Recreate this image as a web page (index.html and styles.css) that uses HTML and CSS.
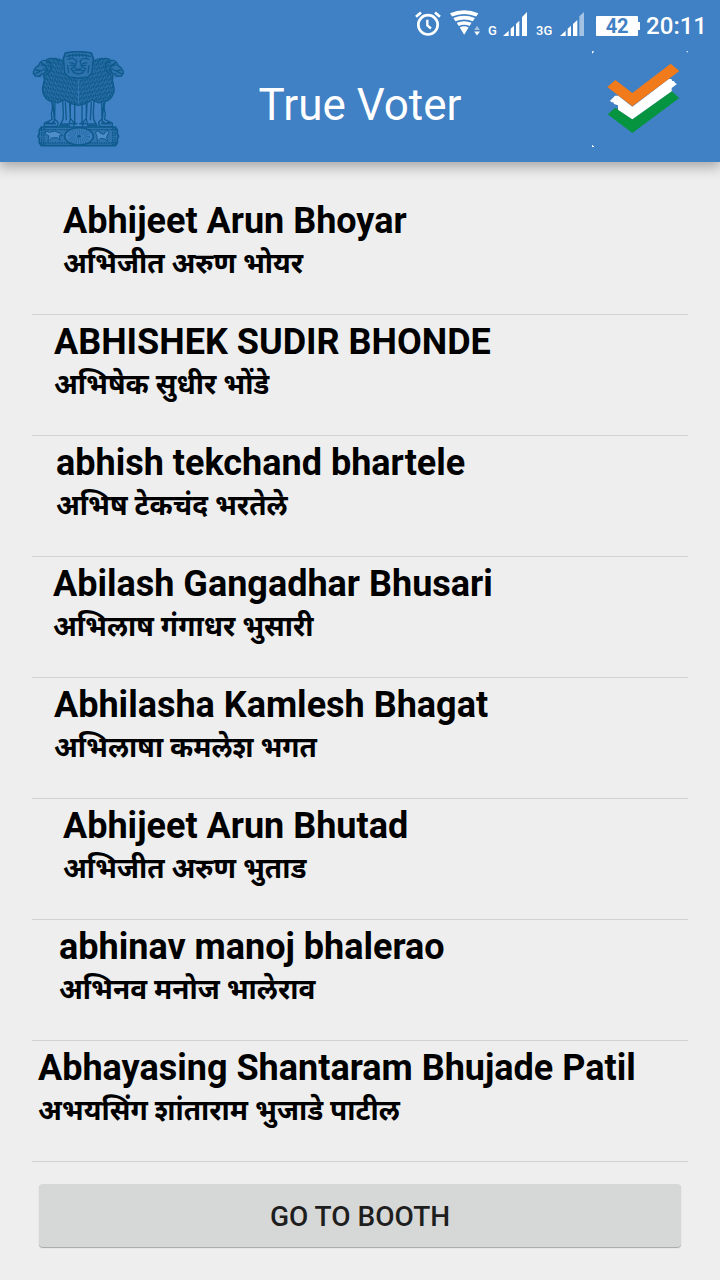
FILE: index.html
```html
<!DOCTYPE html>
<html lang="en">
<head>
<meta charset="utf-8">
<meta name="viewport" content="width=device-width, initial-scale=1">
<title>True Voter</title>
<link rel="stylesheet" href="styles.css">
</head>
<body>
<header class="top">
  <div class="status">
    <svg class="alarm" viewBox="0 0 78 74" aria-hidden="true"><g fill="none" stroke="#fff"><circle cx="39" cy="41" r="29" stroke-width="8"/><path d="M3 17 18 4M60 4l15 13" stroke-width="8"/><path d="M37 26v17l11 9" stroke-width="7"/></g></svg>
    <svg class="wifi" viewBox="0 0 92 76" aria-hidden="true"><path d="M0 9Q42-8 84 9l-6 10Q42 4 6 19zM10 23q32-13 64 0l-6 10q-26-11-52 0zM20 37q22-9 44 0l-6 10q-16-7-32 0zM29 51q13-6 26 0L42 73z" fill="#fff"/><path d="M72 59l8-13 9 13z" fill="#a4c3e4"/><path d="M72 63h17l-9 12z" fill="#fff"/></svg>
    <span class="net">G</span>
    <svg class="signal" viewBox="0 0 72 72" aria-hidden="true"><path d="M0 72 17 56v16zM23 50l10-9v31H23zM39 36l10-10v46H39zM57 15 72 0v72H57z" fill="#fff"/></svg>
    <span class="net net-3g">3G</span>
    <svg class="signal" viewBox="0 0 72 72" aria-hidden="true"><path d="M0 72 17 56v16zM23 50l10-9v31H23zM39 36l13-12v48H39z" fill="#fff"/><path d="M58 13 72 0v72H58z" fill="#a4c3e4"/></svg>
    <span class="battery">42</span>
    <time class="clock">20:11</time>
  </div>
  <div class="bar">
    <svg class="emblem" viewBox="38 34 276 288" aria-hidden="true">
      <defs>
        <pattern id="mane" width="14" height="13" patternUnits="userSpaceOnUse" patternTransform="rotate(12)">
          <path d="M1 1q5 5 2 10M8 5q5 4 2 9M8-8q5 4 2 9" fill="none" stroke="#0e5a8c" stroke-width="5"/>
        </pattern>
        <g id="side">
          <path d="M132 62Q108 48 84 60L66 68Q48 82 43 96l4 10 18 8 8-8q5 14-1 28-6 22 4 36 9 14 23 14l16 6 20-9 20 11 21 5V100h-44z" fill="#2f73ae"/>
          <path d="M132 62Q108 48 84 60L70 82q12 10 3 24 5 14-1 28-6 22 4 36 9 14 23 14l16 6 20-9 20 11 21 5V100h-44z" fill="url(#mane)"/>
          <g fill="none" stroke="#0e5a8c" stroke-linejoin="round" stroke-linecap="round">
            <path d="M120 66Q96 48 78 63q-10-3-16 6-2 10-12 14-9 10-8 18l6 8 12 1 7-7 8-3 8-8-3-13-14-10M50 91l14 3 12-6M46 103l15-7M80 63l14 8 2 16-12 17M66 76l10 1" stroke-width="4"/>
            <path d="M73 106q4 14-1 28-6 21 4 36 9 15 23 14l16 6 20-9 20 11 22 5" stroke-width="4"/>
            <path d="M96 184q7 18 0 38l2 18-23 10v10h39l2-12-10-10 1-52M101 190l4 52M130 184l2 34-1 22-10 18h28l4-21-2-44M138 188l3 52M153 194v42l11 13v10M166 195v58" stroke-width="4"/>
            <path d="M80 252h28M125 253h22M85 247l10 6 10-8M155 252h17" stroke-width="5"/>
          </g>
        </g>
      </defs>
      <use href="#side"/>
      <use href="#side" transform="translate(354 0) scale(-1 1)"/>
      <path d="M138 40q39-8 78 0l6 17-4 43-12 12-29 4-29-4-12-12-4-43z" fill="#2f73ae" stroke="#0e5a8c" stroke-width="5"/>
      <g fill="none" stroke="#0e5a8c" stroke-width="4" stroke-linecap="round">
        <path d="M141 50q36-8 72 0M146 59q16-8 26 5l-5 17-12 6 8 12 14 4 14-4 8-12-12-6-5-17q10-13 26-5M151 69l13 3M190 72l13-3M154 77h13M187 77h13M169 86l8 4 8-4M160 94q17-5 34 0M145 78l3 21M209 78l-3 21"/>
        <path d="M150 44v9M160 43v9M170 42v9M180 42v9M190 42v9M200 43v9" stroke-width="3"/>
      </g>
      <path d="M66 262h222l6 9v12l4 7-4 7v12l-6 9H66l-6-9v-12l-4-7 4-7v-12z" fill="#2f73ae" stroke="#0e5a8c" stroke-width="5"/>
      <path d="M63 270h228M63 310h228M67 263v53M74 263v53M280 263v53M287 263v53" stroke="#0e5a8c" stroke-width="4" stroke-dasharray="5 2"/>
      <ellipse cx="179" cy="290" rx="43" ry="26" fill="#3b7dbd" stroke="#0e5a8c" stroke-width="5"/>
      <ellipse cx="179" cy="290" rx="24" ry="14" fill="none" stroke="#1f689f" stroke-width="18" stroke-dasharray="2 4"/>
      <ellipse cx="179" cy="290" rx="6" ry="4" fill="#0e5a8c"/>
      <path d="M78 274l12 4 16-4 15 6 9 8-10 0 2 15-8-9-17 1-12 11 4-17-11-6z" fill="#4e8dc8" stroke="#0e5a8c" stroke-width="3"/>
      <path d="M228 278l11-5 3 7 12 4 9-14 5 9-6 13 3 14-8-8-14-2-9 10-1-15z" fill="#4e8dc8" stroke="#0e5a8c" stroke-width="3"/>
    </svg>
    <h1 class="title">True Voter</h1>
    <svg class="logo" viewBox="36 14 288 288" aria-hidden="true">
      <path d="M83 204 106 184l51 35 118-84 23 20-141 105z" fill="#079440"/>
      <path d="M90 163l15-15h10l42 33L266 98l8 0 3 6 6 1 2 5 6 3-16 12v10l-118 84-43-29v-13l-12-4-2-5-6 0z" fill="#fff"/>
      <path d="M82 122 106 101l51 39L272 52l26 22-141 106z" fill="#f17a1b"/>
      <path d="M36 15h6v3h-3v3h-3zM320 15h4v3h-4zM36 297h3v2h3v3h-6z" fill="#fff"/>
    </svg>
  </div>
</header>
<main class="content">
  <ul class="voters">
    <li class="voter in-31"><span class="name">Abhijeet Arun Bhoyar</span><span class="local" lang="mr">अभिजीत अरुण भोयर</span></li>
    <li class="voter in-22"><span class="name">ABHISHEK SUDIR BHONDE</span><span class="local" lang="mr">अभिषेक सुधीर भोंडे</span></li>
    <li class="voter in-24"><span class="name">abhish tekchand bhartele</span><span class="local" lang="mr">अभिष टेकचंद भरतेले</span></li>
    <li class="voter in-21"><span class="name">Abilash Gangadhar Bhusari</span><span class="local" lang="mr">अभिलाष गंगाधर भुसारी</span></li>
    <li class="voter in-22"><span class="name">Abhilasha Kamlesh Bhagat</span><span class="local" lang="mr">अभिलाषा कमलेश भगत</span></li>
    <li class="voter in-31"><span class="name">Abhijeet Arun Bhutad</span><span class="local" lang="mr">अभिजीत अरुण भुताड</span></li>
    <li class="voter in-27"><span class="name">abhinav manoj bhalerao</span><span class="local" lang="mr">अभिनव मनोज भालेराव</span></li>
    <li class="voter in-6"><span class="name">Abhayasing Shantaram Bhujade Patil</span><span class="local" lang="mr">अभयसिंग शांताराम भुजाडे पाटील</span></li>
  </ul>
  <button class="booth" type="button">GO TO BOOTH</button>
</main>
</body>
</html>
```
FILE: styles.css
```css
* { box-sizing: border-box; }
body {
  margin: 0;
  min-height: 100vh;
  background: #eeeeee;
  color: #000;
  font-family: Roboto, "Noto Sans", "Noto Sans Devanagari", sans-serif;
}
.top {
  background: #4080c4;
  color: #fff;
  box-shadow: 0 4px 12px 1px rgba(0, 0, 0, 0.3);
}
.status {
  display: flex;
  align-items: flex-end;
  justify-content: flex-end;
  height: 51px;
  padding: 0 13px 15px 0;
}
.alarm { width: 26px; height: 25px; margin-right: 9px; }
.wifi { width: 31px; height: 26px; margin-right: 7px; }
.net {
  width: 15px;
  font-size: 13px;
  line-height: 10px;
  font-weight: 500;
}
.net-3g { width: 24px; margin-left: 9px; }
.signal { width: 24px; height: 24px; }
.battery {
  position: relative;
  width: 42px;
  height: 20px;
  margin: 0 8px 0 12px;
  border-radius: 1px;
  background: #fff;
  color: #4080c4;
  font-size: 20px;
  line-height: 20px;
  font-weight: 700;
  text-align: center;
}
.battery::after {
  content: "";
  position: absolute;
  left: 100%;
  top: 6px;
  width: 2px;
  height: 8px;
  background: #fff;
}
.clock { font-size: 24px; line-height: 20px; font-weight: 500; }
.bar {
  display: grid;
  grid-template-columns: 96px 1fr 96px;
  align-items: start;
  height: 111px;
  padding: 0 32px;
}
.emblem { width: 92px; height: 96px; }
.logo { width: 96px; height: 96px; }
.title {
  margin: 0;
  font-size: 44px;
  line-height: 108px;
  font-weight: 400;
  text-align: center;
}
.content { padding: 32px 32px 24px; }
.voters { margin: 0; padding: 0; list-style: none; }
.voter {
  height: 121px;
  padding-top: 6px;
  border-bottom: 1px solid #d2d2d2;
  font-weight: 700;
  white-space: nowrap;
}
.name, .local { display: block; }
.name { font-size: 36px; line-height: 42px; }
.local { font-size: 28px; line-height: 44px; }
.in-6 { padding-left: 6px; }
.in-21 { padding-left: 21px; }
.in-22 { padding-left: 22px; }
.in-24 { padding-left: 24px; }
.in-27 { padding-left: 27px; }
.in-31 { padding-left: 31px; }
.booth {
  display: block;
  width: calc(100% - 14px);
  height: 63px;
  margin: 22px 7px 0;
  border: 0;
  border-radius: 4px;
  background: #d6d8d7;
  box-shadow: 0 1px 1px rgba(0, 0, 0, 0.3);
  color: #1e1e1e;
  font: 500 28px/64px Roboto, sans-serif;
}
```
